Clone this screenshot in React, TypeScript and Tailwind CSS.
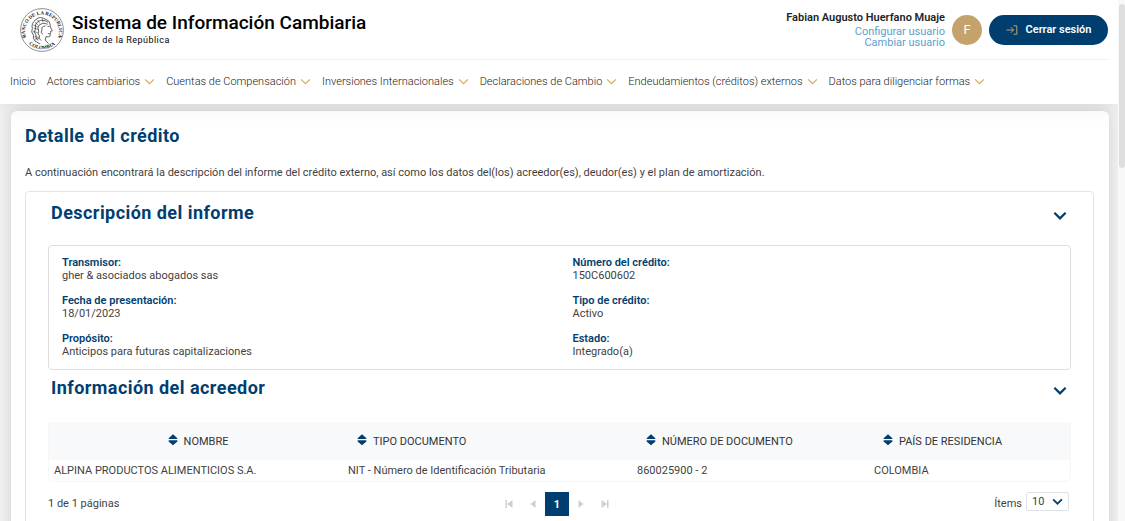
import React from "react";

const menu = [
  "Actores cambiarios",
  "Cuentas de Compensación",
  "Inversiones Internacionales",
  "Declaraciones de Cambio",
  "Endeudamientos (créditos) externos",
  "Datos para diligenciar formas",
];

const details = [
  { label: "Transmisor:", value: "gher & asociados abogados sas" },
  { label: "Número del crédito:", value: "150C600602" },
  { label: "Fecha de presentación:", value: "18/01/2023" },
  { label: "Tipo de crédito:", value: "Activo" },
  { label: "Propósito:", value: "Anticipos para futuras capitalizaciones" },
  { label: "Estado:", value: "Integrado(a)" },
];

const Chevron = ({ className }: { className: string }) => (
  <svg viewBox="0 0 12 8" fill="none" stroke="currentColor" className={className}>
    <path d="M1 1.5 L6 6.5 L11 1.5" />
  </svg>
);

const SortIcon = () => (
  <svg viewBox="0 0 10 12" fill="currentColor" className="mb-[2px] h-3 w-[10px] shrink-0 text-[#003e70]">
    <path d="M5 0.3 L9.4 4.2 Q9.7 5 8.8 5 H1.2 Q0.3 5 0.6 4.2 Z" />
    <path d="M5 11.3 L9.4 7.4 Q9.7 6.2 8.8 6.2 H1.2 Q0.3 6.2 0.6 7.4 Z" />
  </svg>
);

const Logo = () => (
  <svg viewBox="0 0 44 44" className="h-11 w-11 shrink-0 text-[#222]" fill="none" stroke="currentColor">
    <defs>
      <path id="arcTop" d="M8 33.2 A17 17 0 1 1 36 33.2" />
      <path id="arcBottom" d="M4.6 31 A20 20 0 0 0 39.4 31" />
    </defs>
    <circle cx="22" cy="22" r="21.4" strokeWidth="0.5" />
    <g fill="currentColor" stroke="none" className="font-['Liberation_Serif',serif] text-[5px] font-bold">
      <text textAnchor="middle">
        <textPath href="#arcTop" startOffset="50%">BANCO DE LA REPUBLICA</textPath>
      </text>
      <text textAnchor="middle">
        <textPath href="#arcBottom" startOffset="50%">COLOMBIA</textPath>
      </text>
    </g>
    <circle cx="4.4" cy="29" r="0.6" fill="currentColor" stroke="none" />
    <circle cx="39.6" cy="29" r="0.6" fill="currentColor" stroke="none" />
    {/* profile */}
    <path strokeWidth="0.7" d="M26 11.5 Q30 12.5 30.2 17 L30.3 19 L32.3 22.8 L30.5 23.4 L30.8 25.2 L30 26 L30.2 28 Q28.8 29.4 26 28.6 L25.3 32 Q26.5 34 28.5 35.4" />
    <path strokeWidth="0.7" d="M27.4 18.4 h2 M27.8 25.6 h2" />
    {/* hair */}
    <path strokeWidth="0.7" d="M26 11.6 Q20 7.5 16 11.5 Q11 15 12.3 20.5 Q10.5 24 13.5 27.2 Q12.5 30.4 15 33 L20 36" />
    <path strokeWidth="0.7" d="M28 14.4 Q23 10.5 18 13.5 Q14 16.5 15.4 21 Q13.2 24 16 27 Q15 30 18 32.5" />
    <path strokeWidth="0.7" d="M27.7 16.2 Q22.5 13.7 19.3 17 Q16.8 20 18.7 23.2 Q17 25.8 19.5 28 Q18 30.3 21 32.5" />
    <path strokeWidth="0.7" d="M25.5 18 Q21 18 22 22 Q20 24 22.6 26.4" />
    <path strokeWidth="0.5" d="M13.5 17 l4.4 2 M12.8 23.5 l5 1 M14.5 28.8 l4.5 0.5 M17.4 12 l2.4 3.4 M22.3 10.8 l0.8 3.4 M14.8 14.4 l3.6 2.6 M13.6 20 l4.6 1.4 M14.8 31 l4.4 -0.4" />
  </svg>
);

const Header = () => (
  <header className="relative z-10 bg-white px-[10px] shadow-[0_0_20px_rgba(0,0,0,0.1)]">
    <div className="flex h-[60px] items-center justify-between border-b border-[#f1f1f1]">
      <div className="flex items-center gap-2 pl-[10px]">
        <Logo />
        <div className="flex flex-col pb-[2px] text-black">
          <span className="text-[19px] font-medium leading-[22px]">Sistema de Información Cambiaria</span>
          <span className="text-[9px] leading-3 tracking-wider">Banco de la República</span>
        </div>
      </div>
      <div className="flex items-center gap-[7px]">
        <div className="flex flex-col items-end text-[11px] leading-[11px] text-[#5a9fce]">
          <span className="pb-[3px] font-semibold text-[#212529]">Fabian Augusto Huerfano Muaje</span>
          <a href="#configurar">Configurar usuario</a>
          <a href="#cambiar">Cambiar usuario</a>
        </div>
        <div className="flex h-[30px] w-[30px] items-center justify-center rounded-full bg-[#c3a26b] text-[13px] text-white">
          F
        </div>
        <button className="flex h-[30px] w-[119px] items-center justify-center gap-2 rounded-full bg-[#003e70] text-[11px] font-semibold text-white">
          <svg viewBox="0 0 12 10" fill="none" stroke="currentColor" className="h-[10px] w-3 text-[#c3a26b]">
            <path d="M0.5 5 H7.5 M4.8 2.2 L7.6 5 L4.8 7.8 M7.5 0.8 H10.8 V9.2 H7.5" />
          </svg>
          Cerrar sesión
        </button>
      </div>
    </div>
    <nav className="flex h-11 items-center gap-[11px] pb-[2px] text-[11px] font-light text-[#222]">
      <a href="#inicio">Inicio</a>
      {menu.map((item) => (
        <a key={item} href="#menu" className="flex items-center gap-1 whitespace-nowrap">
          {item}
          <Chevron className="h-[7px] w-[11px] stroke-[1.4] text-[#d3ac66]" />
        </a>
      ))}
    </nav>
  </header>
);

const SectionTitle = ({ title }: { title: string }) => (
  <div className="flex items-center justify-between pl-[3px] pr-1">
    <h2 className="text-[18px] font-bold leading-6 tracking-wide text-[#003e70]">{title}</h2>
    <button aria-label={title} className="pt-[5px]">
      <Chevron className="h-[9px] w-[14px] stroke-2 text-[#003e70]" />
    </button>
  </div>
);

const CreditorTable = () => (
  <div className="overflow-hidden rounded-b-md border border-t-0 border-[#f6f6f6]">
    <table className="w-full table-fixed text-left">
      <thead className="bg-[#f8f9fb] text-[#333]">
        <tr className="h-[38px]">
          <th className="w-[294px] pl-1 font-normal">
            <span className="flex items-center justify-center gap-[6px]"><SortIcon />NOMBRE</span>
          </th>
          <th className="w-[289px] pl-[14px] font-normal">
            <span className="flex items-center gap-[6px]"><SortIcon />TIPO DOCUMENTO</span>
          </th>
          <th className="w-[237px] pl-[14px] font-normal">
            <span className="flex items-center gap-[6px]"><SortIcon />NÚMERO DE DOCUMENTO</span>
          </th>
          <th className="w-[202px] pl-[14px] font-normal">
            <span className="flex items-center gap-[6px]"><SortIcon />PAÍS DE RESIDENCIA</span>
          </th>
        </tr>
      </thead>
      <tbody>
        <tr className="h-[21px]">
          <td className="pl-[5px]">ALPINA PRODUCTOS ALIMENTICIOS S.A.</td>
          <td className="pl-[5px]">NIT - Número de Identificación Tributaria</td>
          <td className="pl-[5px]">860025900 - 2</td>
          <td className="pl-[5px]">COLOMBIA</td>
        </tr>
      </tbody>
    </table>
  </div>
);

const Pagination = () => (
  <div className="flex items-center justify-between pt-[10px]">
    <span className="pb-[2px]">1 de 1 páginas</span>
    <div className="flex items-center text-[#cfcfcf]">
      <button aria-label="Primera página" className="flex w-6 justify-center">
        <svg viewBox="0 0 8 8" fill="currentColor" className="h-2 w-2">
          <path d="M0.5 0 h1.5 v8 h-1.5 Z M7.5 0 v8 L2 4 Z" />
        </svg>
      </button>
      <button aria-label="Página anterior" className="flex w-6 justify-center">
        <svg viewBox="0 0 8 8" fill="currentColor" className="h-2 w-2">
          <path d="M6.5 0 v8 L1.5 4 Z" />
        </svg>
      </button>
      <button className="h-6 w-6 bg-[#003e70] font-bold text-white">1</button>
      <button aria-label="Página siguiente" className="flex w-6 justify-center">
        <svg viewBox="0 0 8 8" fill="currentColor" className="h-2 w-2">
          <path d="M1.5 0 v8 L6.5 4 Z" />
        </svg>
      </button>
      <button aria-label="Última página" className="flex w-6 justify-center">
        <svg viewBox="0 0 8 8" fill="currentColor" className="h-2 w-2">
          <path d="M6 0 h1.5 v8 h-1.5 Z M0.5 0 v8 L6 4 Z" />
        </svg>
      </button>
    </div>
    <div className="flex items-center justify-end gap-1 pb-[5px] pr-[2px]">
      <label htmlFor="items" className="pt-[3px]">Ítems</label>
      <div className="relative">
        <select id="items" className="h-[19px] w-[43px] appearance-none rounded-xs border border-[#dee2e6] bg-white pl-[5px]">
          <option>10</option>
          <option>20</option>
        </select>
        <Chevron className="pointer-events-none absolute right-[6px] top-[6px] h-[7px] w-[11px] stroke-2 text-[#003e70]" />
      </div>
    </div>
  </div>
);

const App = () => {
  return (
    <div className="flex h-screen overflow-hidden bg-[#f2f2f2] font-[Roboto,sans-serif] text-[11px] leading-[13px] text-[#3f3f3f]">
      <div className="min-w-0 flex-1 overflow-hidden">
        <Header />
        <main className="pl-[11px] pr-[9px] pt-[7px]">
          <div className="rounded-t-md bg-white pl-[14px] pr-[15px] pt-[13px] shadow-[0_0_16px_rgba(0,0,0,0.14)]">
            <h1 className="text-[18px] font-bold leading-6 tracking-wide text-[#003e70]">Detalle del crédito</h1>
            <p className="pt-[18px]">
              A continuación encontrará la descripción del informe del crédito externo, así como los datos del(los)
              acreedor(es), deudor(es) y el plan de amortización.
            </p>
            <section className="mt-3 rounded-sm border border-[#e4e4e4] px-[22px] pb-10 pt-[9px]">
              <SectionTitle title="Descripción del informe" />
              <dl className="mb-[6px] mt-5 grid grid-cols-2 gap-y-3 rounded-sm border border-[#dedede] pb-[11px] pt-[10px]">
                {details.map(({ label, value }) => (
                  <div key={label} className="px-[13px]">
                    <dt className="font-semibold text-[#003e70]">{label}</dt>
                    <dd>{value}</dd>
                  </div>
                ))}
              </dl>
              <SectionTitle title="Información del acreedor" />
              <div className="pt-[22px]">
                <CreditorTable />
                <Pagination />
              </div>
            </section>
          </div>
        </main>
      </div>
      <div className="w-[7px] shrink-0 bg-[#f8f8f8] pt-1">
        <div className="ml-px h-[164px] rounded-full bg-[#dfdfdf]" />
      </div>
    </div>
  );
};

export default App;
